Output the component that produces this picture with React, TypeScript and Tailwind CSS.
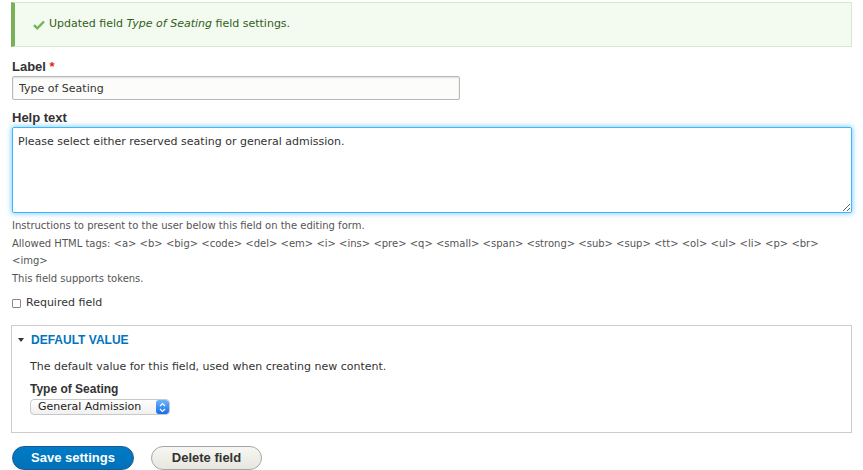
import { useState } from "react";

const tags = "<a> <b> <big> <code> <del> <em> <i> <ins> <pre> <q> <small> <span> <strong> <sub> <sup> <tt> <ol> <ul> <li> <p> <br>";

export default function App() {
    const [label, setLabel] = useState("Type of Seating");
    const [help, setHelp] = useState("Please select either reserved seating or general admission.");
    const [required, setRequired] = useState(false);
    const [open, setOpen] = useState(true);

    return (
        <div className="w-[863px] h-[470px] overflow-hidden bg-white px-[11px] pt-[2px] text-[#333] font-['DejaVu_Sans',Verdana,sans-serif]">
            {/* Status message */}
            <div className="flex items-center h-[45px] border border-[#d8e8cc] border-l-4 border-l-[#77b259] bg-[#f3faef] pl-[18px] w-[841px]">
                <svg width="12" height="10" viewBox="0 0 12 10" className="mr-[4px]">
                    <path d="M1 5.2 L4.3 8.3 L11 1.5" fill="none" stroke="#73b355" strokeWidth="2.4" />
                </svg>
                <p className="text-[11px] text-[#325e1c]">
                    Updated field <em>Type of Seating</em> field settings.
                </p>
            </div>

            {/* Label */}
            <div className="mt-[11px] pl-px">
                <label className="block text-[13px] font-bold leading-[18px] font-['Liberation_Sans',Arial,sans-serif]">
                    Label <span className="text-[#e62600]">*</span>
                </label>
                <input
                    value={label}
                    onChange={(e) => setLabel(e.target.value)}
                    className="block w-[448px] h-[24px] px-[6px] text-[11px] border border-[#b8b8b8] rounded-[2px] bg-[#fcfcfa] shadow-[inset_0_1px_2px_rgba(0,0,0,0.12)] outline-none"
                />
            </div>

            {/* Help text */}
            <div className="mt-[9px] pl-px">
                <label className="block text-[13px] font-bold leading-[18px] font-['Liberation_Sans',Arial,sans-serif]">Help text</label>
                <textarea
                    value={help}
                    onChange={(e) => setHelp(e.target.value)}
                    className="block w-[840px] h-[86px] px-[5px] py-[6px] text-[11px] leading-[16px] border border-[#40b6ff] rounded-[2px] bg-white shadow-[0_0_5px_1px_rgba(64,182,255,0.6)] outline-none resize-y"
                />
                <div className="mt-[4px] text-[10px] leading-[17.5px] text-[#555]">
                    <p>Instructions to present to the user below this field on the editing form.</p>
                    <p>Allowed HTML tags: {tags}</p>
                    <p>{"<img>"}</p>
                    <p>This field supports tokens.</p>
                </div>
            </div>

            {/* Required */}
            <label className="flex items-center gap-[5px] mt-[7px] pl-px text-[11px] text-[#333] leading-[18px]">
                <input
                    type="checkbox"
                    checked={required}
                    onChange={(e) => setRequired(e.target.checked)}
                    className="w-[9px] h-[9px] appearance-none border border-[#888] rounded-[1px] bg-white"
                />
                Required field
            </label>

            {/* Default value */}
            <div className="mt-[13px] w-[841px] h-[108px] border border-[#ccc] px-[6px] pt-[5px]">
                <button
                    type="button"
                    onClick={() => setOpen(!open)}
                    className="flex items-center gap-[7px] text-[12px] font-bold text-[#0074bd] leading-[18px] font-['Liberation_Sans',Arial,sans-serif]"
                >
                    <svg width="6" height="4" viewBox="0 0 6 4">
                        <path d="M0 0 H6 L3 4 Z" fill="#333" />
                    </svg>
                    DEFAULT VALUE
                </button>
                {open && (
                    <div className="pl-[12px] mt-[9px]">
                        <p className="text-[11px] leading-[18px]">The default value for this field, used when creating new content.</p>
                        <p className="mt-[4px] text-[12px] font-bold leading-[18px] font-['Liberation_Sans',Arial,sans-serif]">Type of Seating</p>
                        <div className="flex items-center mt-[1px] w-[140px] h-[16px] border border-[#c8c8c8] rounded-[4px] bg-gradient-to-b from-white to-[#f0f0f0] overflow-hidden">
                            <span className="flex-1 pl-[7px] text-[11px] leading-[14px] text-[#222]">General Admission</span>
                            <span className="flex flex-col items-center justify-center w-[13px] h-full bg-gradient-to-b from-[#6cb3fa] to-[#0d6ee8] rounded-[3px]">
                                <svg width="7" height="11" viewBox="0 0 7 11">
                                    <path d="M1 4 L3.5 1.5 L6 4 M1 7 L3.5 9.5 L6 7" fill="none" stroke="white" strokeWidth="1.2" />
                                </svg>
                            </span>
                        </div>
                    </div>
                )}
            </div>

            {/* Actions */}
            <div className="flex gap-[17px] mt-[13px] pl-px font-['Liberation_Sans',Arial,sans-serif]">
                <button
                    type="button"
                    className="w-[122px] h-[24px] rounded-[12px] border border-[#1e5c90] bg-gradient-to-b from-[#007bc6] to-[#0071b8] text-white text-[13px] font-bold"
                >
                    Save settings
                </button>
                <button
                    type="button"
                    className="w-[111px] h-[24px] rounded-[12px] border border-[#a6a6a6] bg-gradient-to-b from-[#f6f6f3] to-[#e7e7df] text-[#333] text-[13px] font-bold"
                >
                    Delete field
                </button>
            </div>
        </div>
    );
}
